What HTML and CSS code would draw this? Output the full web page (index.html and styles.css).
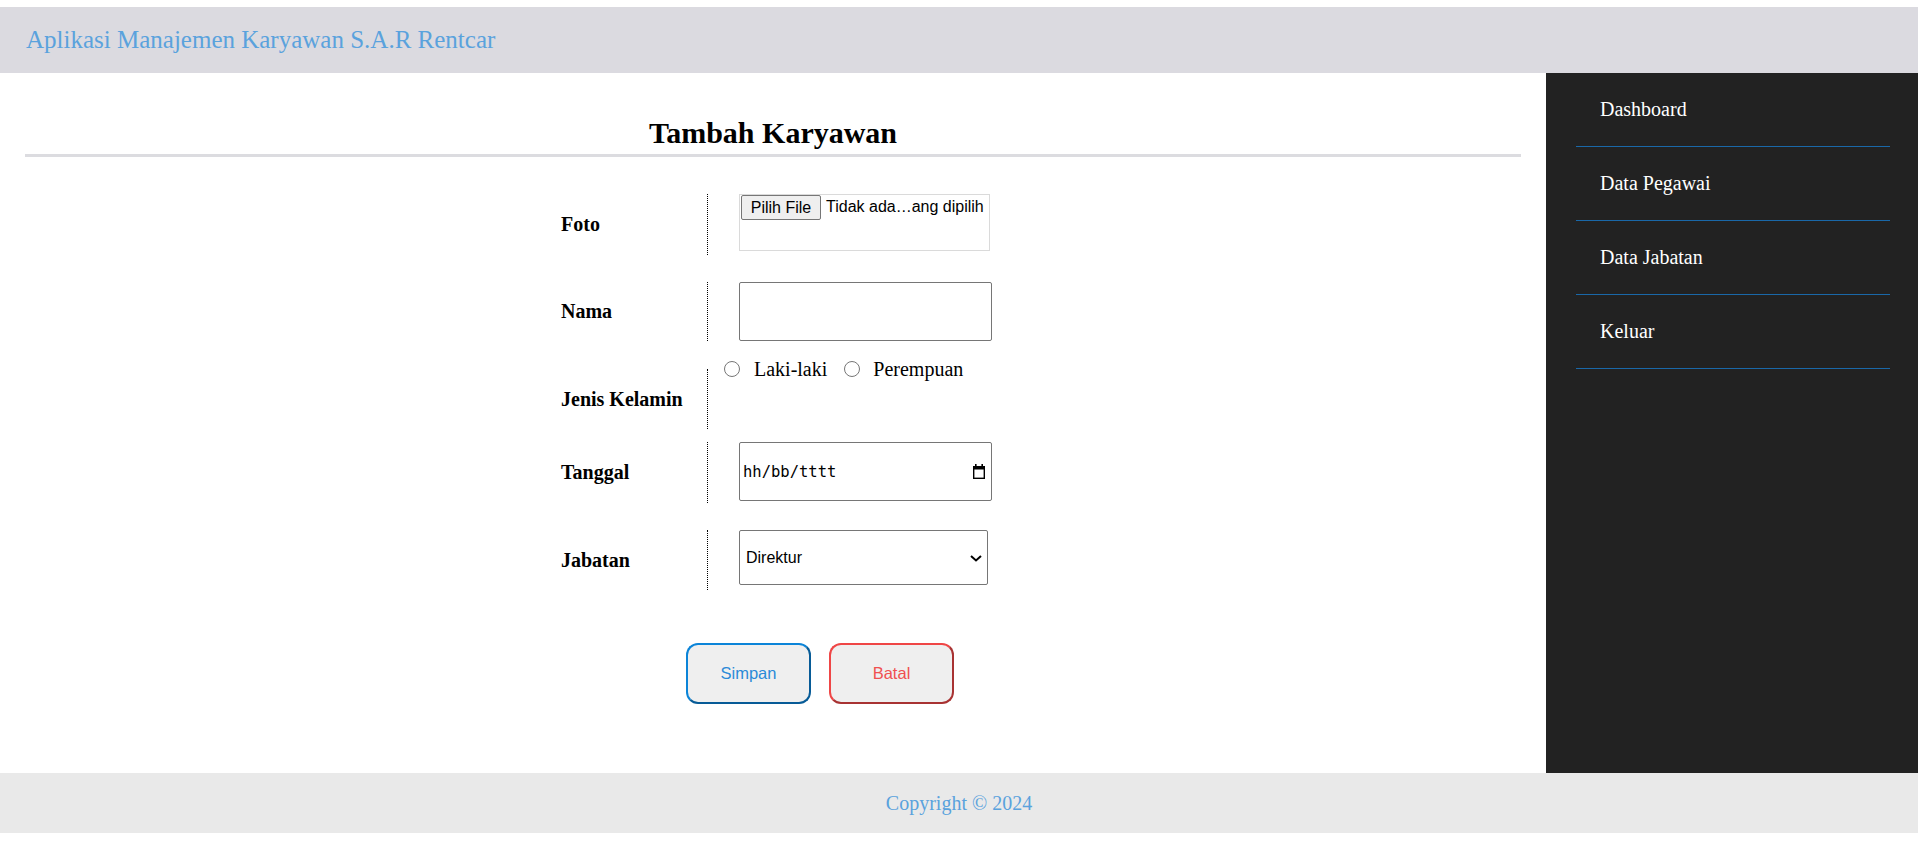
FILE: index.html
```html
<!DOCTYPE html>
<html lang="id">
<head>
<meta charset="utf-8">
<title>Tambah Karyawan</title>
<link rel="stylesheet" href="styles.css">
</head>
<body>
<header class="topbar">
  <div class="brand">Aplikasi Manajemen Karyawan S.A.R Rentcar</div>
</header>
<div class="layout">
  <main class="content">
    <h2 class="page-title">Tambah Karyawan</h2>
    <form class="form">
      <div class="row row-foto">
        <div class="label">Foto</div>
        <div class="value">
          <div class="file-box">
            <span class="file-btn">Pilih File</span>
            <span class="file-name">Tidak ada…ang dipilih</span>
          </div>
        </div>
      </div>
      <div class="row row-nama">
        <div class="label">Nama</div>
        <div class="value">
          <input class="text-input" type="text">
        </div>
      </div>
      <div class="row row-jk">
        <div class="label">Jenis Kelamin</div>
        <div class="value value-radio">
          <div class="radio-group">
            <input class="radio" type="radio" name="jk" id="jk1">
            <label class="radio-label" for="jk1">Laki-laki</label>
            <input class="radio radio-second" type="radio" name="jk" id="jk2">
            <label class="radio-label" for="jk2">Perempuan</label>
          </div>
        </div>
      </div>
      <div class="row row-tgl">
        <div class="label">Tanggal</div>
        <div class="value">
          <div class="date-input">
            <span class="date-ph">hh/bb/tttt</span>
            <svg class="cal-icon" width="14" height="15" viewBox="0 0 14 15">
              <rect x="3" y="0" width="1.6" height="3" fill="#000"/>
              <rect x="9.4" y="0" width="1.6" height="3" fill="#000"/>
              <rect x="1.7" y="2.7" width="10.6" height="11.6" fill="none" stroke="#000" stroke-width="1.4"/>
              <rect x="1.7" y="2.7" width="10.6" height="2.8" fill="#000"/>
            </svg>
          </div>
        </div>
      </div>
      <div class="row row-jab">
        <div class="label">Jabatan</div>
        <div class="value">
          <div class="select-wrap">
            <select class="select">
              <option>Direktur</option>
              <option>Manajer</option>
              <option>Staff</option>
            </select>
            <svg class="chev" width="12" height="7" viewBox="0 0 12 7">
              <polyline points="1,1 6,5.5 11,1" fill="none" stroke="#000" stroke-width="2"/>
            </svg>
          </div>
        </div>
      </div>
      <div class="actions">
        <button type="button" class="btn btn-save">Simpan</button>
        <button type="button" class="btn btn-cancel">Batal</button>
      </div>
    </form>
  </main>
  <aside class="sidebar">
    <ul class="menu">
      <li class="menu-item">Dashboard</li>
      <li class="menu-item">Data Pegawai</li>
      <li class="menu-item">Data Jabatan</li>
      <li class="menu-item">Keluar</li>
    </ul>
  </aside>
</div>
<footer class="footer">Copyright © 2024</footer>
</body>
</html>
```
FILE: styles.css
```css
* { box-sizing: border-box; }
html, body { margin: 0; padding: 0; }
body {
  padding-top: 7px;
  font-family: "Liberation Serif", "Times New Roman", serif;
  background: #fff;
  color: #000;
}
.topbar {
  height: 66px;
  background: #dbdae0;
  padding-left: 26px;
}
.brand {
  font-size: 25px;
  line-height: 66px;
  color: #5aa2dd;
}
.layout {
  display: flex;
  height: 700px;
}
.content {
  flex: 1;
  padding: 0 25px;
}
.page-title {
  margin: 43px 0 0;
  font-size: 30px;
  line-height: 34px;
  font-weight: bold;
  text-align: center;
  padding-bottom: 4px;
  border-bottom: 3px solid #dcdce0;
}
.form {
  width: 444px;
  margin: 0 auto;
}
.row {
  display: flex;
}
.row-foto { margin-top: 37px; height: 61px; }
.row-nama { margin-top: 27px; height: 59px; }
.row-jk { margin-top: 28px; height: 60px; }
.row-tgl { margin-top: 13px; height: 61px; }
.row-jab { margin-top: 27px; height: 60px; }
.label {
  width: 157px;
  padding-left: 10px;
  border-right: 1px dotted #000;
  display: flex;
  align-items: center;
  font-weight: bold;
  font-size: 20px;
}
.value {
  flex: 1;
  padding-left: 31px;
}
.file-box {
  width: 251px;
  height: 57px;
  border: 1px solid #dadada;
  display: flex;
  align-items: flex-start;
  font-family: "Liberation Sans", Arial, sans-serif;
  font-size: 16px;
}
.file-btn {
  margin: 0 0 0 1px;
  width: 80px;
  height: 25px;
  line-height: 23px;
  text-align: center;
  background: #efefef;
  border: 1px solid #767676;
  border-radius: 2px;
  color: #000;
}
.file-name {
  margin-left: 5px;
  line-height: 23px;
  white-space: nowrap;
}
.text-input {
  display: block;
  width: 253px;
  height: 59px;
  margin: 0;
  border: 1px solid #767676;
  border-radius: 2px;
  font-size: 16px;
  font-family: "Liberation Sans", Arial, sans-serif;
  padding: 0 3px;
}
.value-radio {
  padding-left: 16px;
}
.radio-group {
  display: flex;
  align-items: center;
  height: 24px;
  margin-top: -12px;
  font-size: 20px;
}
.radio {
  width: 16px;
  height: 16px;
  margin: 0 14px 0 0;
}
.radio-second {
  margin-left: 17px;
  margin-right: 13px;
}
.radio-label {
  line-height: 24px;
}
.date-input {
  width: 253px;
  height: 59px;
  border: 1px solid #767676;
  border-radius: 2px;
  display: flex;
  align-items: center;
  justify-content: space-between;
  padding: 0 5px 0 3px;
}
.date-ph {
  font-family: "DejaVu Sans Mono", "Liberation Mono", monospace;
  font-size: 15.5px;
}
.cal-icon { display: block; }
.select-wrap {
  position: relative;
  width: 249px;
  height: 55px;
}
.select {
  appearance: none;
  -webkit-appearance: none;
  width: 249px;
  height: 55px;
  margin: 0;
  border: 1px solid #767676;
  border-radius: 2px;
  background: #fff;
  font-family: "Liberation Sans", Arial, sans-serif;
  font-size: 16px;
  color: #000;
  padding: 0 0 0 6px;
}
.chev {
  position: absolute;
  right: 6px;
  top: 25px;
  pointer-events: none;
}
.actions {
  display: flex;
  gap: 18px;
  margin-top: 53px;
  padding-left: 135px;
}
.btn {
  width: 125px;
  height: 61px;
  border-width: 2px;
  border-style: solid;
  border-radius: 12px;
  background: #efefef;
  font-family: "Liberation Sans", Arial, sans-serif;
  font-size: 16.5px;
  padding: 0;
}
.btn-save {
  color: #2a8ad8;
  border-color: #0b84d8 #075b97 #075b97 #0b84d8;
}
.btn-cancel {
  color: #f05050;
  border-color: #ef4646 #a83232 #a83232 #ef4646;
}
.sidebar {
  width: 372px;
  background: #222222;
  padding: 0 28px 0 30px;
}
.menu {
  list-style: none;
  margin: 0;
  padding: 0;
}
.menu-item {
  padding: 25px 0 25px 24px;
  line-height: 23px;
  font-size: 20px;
  color: #fff;
  border-bottom: 1px solid #1a68a8;
}
.footer {
  height: 60px;
  line-height: 60px;
  background: #e9e9e9;
  text-align: center;
  font-size: 20px;
  color: #5aa2dd;
}
```
